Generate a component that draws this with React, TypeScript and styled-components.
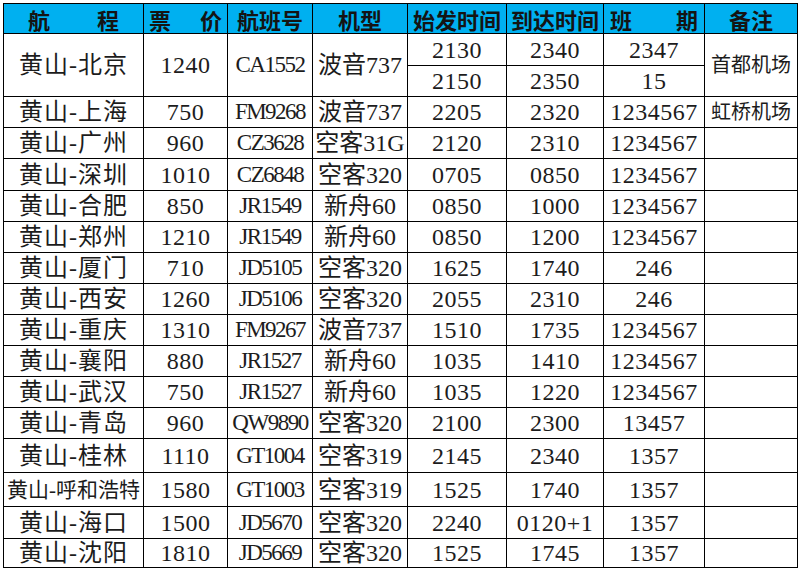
import React from "react";
import styled, { createGlobalStyle } from "styled-components";

const Global = createGlobalStyle`
  html, body { margin: 0; padding: 0; background: #ffffff; }
  #root { width: 801px; height: 571px; }
`;

const Page = styled.div`
  padding: 3px 0 0 3px;
  width: 801px;
  height: 571px;
  box-sizing: border-box;
  background: #ffffff;
`;

const Sheet = styled.table`
  border-collapse: collapse;
  table-layout: fixed;
  width: 794px;
  font-family: "Liberation Serif", "Noto Sans CJK SC", serif;
  color: #1c1c1c;
`;

const HeadRow = styled.tr`
  height: 30px;
`;

const HeadCell = styled.th`
  background: #00b0f0;
  border: 1px solid #000;
  padding: 0;
  font-family: "Noto Sans CJK SC", sans-serif;
  font-weight: 700;
  font-size: 22px;
  line-height: 28px;
  color: #141414;
  text-align: center;
  white-space: nowrap;
  overflow: hidden;
`;

const Spread = styled.div<{ $pad: number }>`
  display: flex;
  justify-content: space-between;
  padding: 0 ${(p) => p.$pad}px;
`;

const Row = styled.tr<{ $h: number }>`
  height: ${(p) => p.$h}px;
`;

const Cell = styled.td<{ $size?: number; $spacing?: number }>`
  border: 1px solid #000;
  padding: 0;
  font-size: ${(p) => p.$size ?? 24}px;
  line-height: 26px;
  text-align: center;
  vertical-align: middle;
  white-space: nowrap;
  overflow: hidden;
  letter-spacing: ${(p) => p.$spacing ?? 0}px;
`;

type Flight = {
  route: string;
  price: string;
  flight: string;
  plane: string;
  dep: string;
  arr: string;
  sched: string;
  note?: string;
  h: number;
  small?: boolean;
};

const flights: Flight[] = [
  { route: "黄山-上海", price: "750", flight: "FM9268", plane: "波音737", dep: "2205", arr: "2320", sched: "1234567", note: "虹桥机场", h: 31 },
  { route: "黄山-广州", price: "960", flight: "CZ3628", plane: "空客31G", dep: "2120", arr: "2310", sched: "1234567", h: 31 },
  { route: "黄山-深圳", price: "1010", flight: "CZ6848", plane: "空客320", dep: "0705", arr: "0850", sched: "1234567", h: 32 },
  { route: "黄山-合肥", price: "850", flight: "JR1549", plane: "新舟60", dep: "0850", arr: "1000", sched: "1234567", h: 31 },
  { route: "黄山-郑州", price: "1210", flight: "JR1549", plane: "新舟60", dep: "0850", arr: "1200", sched: "1234567", h: 31 },
  { route: "黄山-厦门", price: "710", flight: "JD5105", plane: "空客320", dep: "1625", arr: "1740", sched: "246", h: 31 },
  { route: "黄山-西安", price: "1260", flight: "JD5106", plane: "空客320", dep: "2055", arr: "2310", sched: "246", h: 31 },
  { route: "黄山-重庆", price: "1310", flight: "FM9267", plane: "波音737", dep: "1510", arr: "1735", sched: "1234567", h: 31 },
  { route: "黄山-襄阳", price: "880", flight: "JR1527", plane: "新舟60", dep: "1035", arr: "1410", sched: "1234567", h: 31 },
  { route: "黄山-武汉", price: "750", flight: "JR1527", plane: "新舟60", dep: "1035", arr: "1220", sched: "1234567", h: 31 },
  { route: "黄山-青岛", price: "960", flight: "QW9890", plane: "空客320", dep: "2100", arr: "2300", sched: "13457", h: 31 },
  { route: "黄山-桂林", price: "1110", flight: "GT1004", plane: "空客319", dep: "2145", arr: "2340", sched: "1357", h: 34 },
  { route: "黄山-呼和浩特", price: "1580", flight: "GT1003", plane: "空客319", dep: "1525", arr: "1740", sched: "1357", h: 34, small: true },
  { route: "黄山-海口", price: "1500", flight: "JD5670", plane: "空客320", dep: "2240", arr: "0120+1", sched: "1357", h: 32 },
  { route: "黄山-沈阳", price: "1810", flight: "JD5669", plane: "空客320", dep: "1525", arr: "1745", sched: "1357", h: 29 },
];

const widths = [140, 84, 85, 95, 99, 97, 101, 93];

export default function App() {
  return (
    <Page>
      <Global />
      <Sheet>
        <colgroup>
          {widths.map((w, i) => (
            <col key={i} style={{ width: w }} />
          ))}
        </colgroup>
        <thead>
          <HeadRow>
            <HeadCell>
              <Spread $pad={24}>
                <span>航</span>
                <span>程</span>
              </Spread>
            </HeadCell>
            <HeadCell>
              <Spread $pad={5}>
                <span>票</span>
                <span>价</span>
              </Spread>
            </HeadCell>
            <HeadCell>航班号</HeadCell>
            <HeadCell>机型</HeadCell>
            <HeadCell>始发时间</HeadCell>
            <HeadCell>到达时间</HeadCell>
            <HeadCell>
              <Spread $pad={6}>
                <span>班</span>
                <span>期</span>
              </Spread>
            </HeadCell>
            <HeadCell>备注</HeadCell>
          </HeadRow>
        </thead>
        <tbody>
          <Row $h={32}>
            <Cell rowSpan={2} $spacing={1}>黄山-北京</Cell>
            <Cell rowSpan={2} $spacing={0.5}>1240</Cell>
            <Cell rowSpan={2} $size={23} $spacing={-1.5}>CA1552</Cell>
            <Cell rowSpan={2}>波音737</Cell>
            <Cell $spacing={0.5}>2130</Cell>
            <Cell $spacing={0.5}>2340</Cell>
            <Cell $spacing={0.5}>2347</Cell>
            <Cell rowSpan={2} $size={20}>首都机场</Cell>
          </Row>
          <Row $h={31}>
            <Cell $spacing={0.5}>2150</Cell>
            <Cell $spacing={0.5}>2350</Cell>
            <Cell $spacing={0.5}>15</Cell>
          </Row>
          {flights.map((f) => (
            <Row key={f.route} $h={f.h}>
              <Cell $size={f.small ? 21 : 24} $spacing={f.small ? 0 : 1}>
                {f.route}
              </Cell>
              <Cell $spacing={0.5}>{f.price}</Cell>
              <Cell $size={23} $spacing={-1.5}>{f.flight}</Cell>
              <Cell>{f.plane}</Cell>
              <Cell $spacing={0.5}>{f.dep}</Cell>
              <Cell $spacing={0.5}>{f.arr}</Cell>
              <Cell $spacing={0.5}>{f.sched}</Cell>
              <Cell $size={20}>{f.note ?? ""}</Cell>
            </Row>
          ))}
        </tbody>
      </Sheet>
    </Page>
  );
}
